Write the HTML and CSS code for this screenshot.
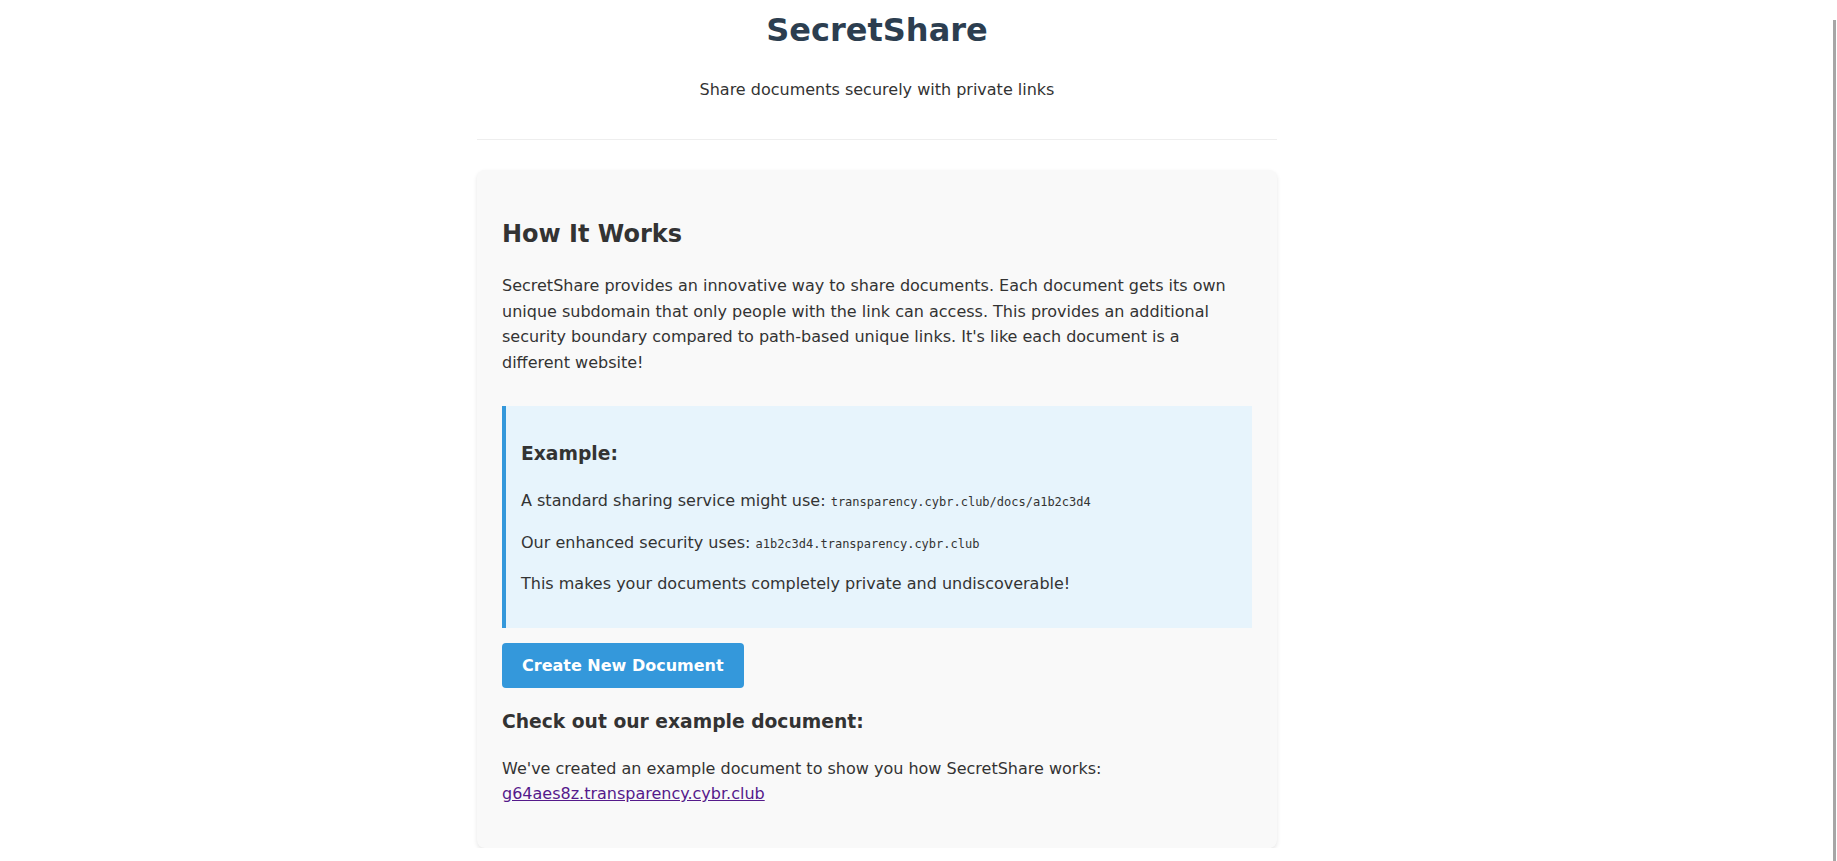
FILE: index.html
```html
<!DOCTYPE html>
<html lang="en">
<head>
<meta charset="utf-8">
<title>SecretShare</title>
<link rel="stylesheet" href="styles.css">
</head>
<body>
<div class="page">
  <header class="header">
    <h1 class="title">SecretShare</h1>
    <p class="subtitle">Share documents securely with private links</p>
  </header>
  <main class="card">
    <h2 class="card-title">How It Works</h2>
    <p>SecretShare provides an innovative way to share documents. Each document gets its own unique subdomain that only people with the link can access. This provides an additional security boundary compared to path-based unique links. It's like each document is a different website!</p>
    <div class="example">
      <h3>Example:</h3>
      <p>A standard sharing service might use: <code>transparency.cybr.club/docs/a1b2c3d4</code></p>
      <p>Our enhanced security uses: <code>a1b2c3d4.transparency.cybr.club</code></p>
      <p>This makes your documents completely private and undiscoverable!</p>
    </div>
    <button class="btn" type="button">Create New Document</button>
    <h3>Check out our example document:</h3>
    <p>We've created an example document to show you how SecretShare works: <a class="link" href="#">g64aes8z.transparency.cybr.club</a></p>
  </main>
</div>
<div class="scroll-thumb"></div>
</body>
</html>
```

FILE: styles.css
```css
html, body {
  margin: 0;
  padding: 0;
  background: #ffffff;
}

body {
  font-family: "DejaVu Sans", Verdana, sans-serif;
  font-size: 16px;
  line-height: 1.6;
  color: #333333;
  padding-right: 83px;
}

.page {
  max-width: 800px;
  margin: 0 auto;
}

.header {
  text-align: center;
  padding-bottom: 20px;
  border-bottom: 1px solid #eeeeee;
  margin-bottom: 30px;
}

.title {
  font-size: 32px;
  font-weight: bold;
  color: #2c3e50;
  margin: 5px 0 21px;
}

.subtitle {
  margin: 16px 0;
  color: #333333;
}

.card {
  display: block;
  background: #f9f9f9;
  border-radius: 8px;
  box-shadow: 0 2px 4px rgba(0, 0, 0, 0.1);
  padding: 25px;
}

.card h2 {
  font-size: 24px;
  margin: 20px 0;
}

.card h3 {
  font-size: 18.72px;
  margin: 18.72px 0;
}

.card p {
  margin: 16px 0;
}

.example {
  background: #e7f4fc;
  border-left: 4px solid #3498db;
  padding: 15px;
  margin: 30px 0 15px;
}

code {
  font-family: "DejaVu Sans Mono", monospace;
  font-size: 12px;
}

.btn {
  display: block;
  background: #3498db;
  color: #ffffff;
  border: none;
  border-radius: 4px;
  padding: 10px 20px;
  font-family: "DejaVu Sans", Verdana, sans-serif;
  font-size: 16px;
  font-weight: bold;
  line-height: 1.6;
  cursor: pointer;
}

.link {
  color: #551a8b;
  text-decoration: underline;
}

.scroll-thumb {
  position: fixed;
  top: 20px;
  bottom: 0;
  right: 1px;
  width: 3px;
  background: #a6a6a6;
}
```
